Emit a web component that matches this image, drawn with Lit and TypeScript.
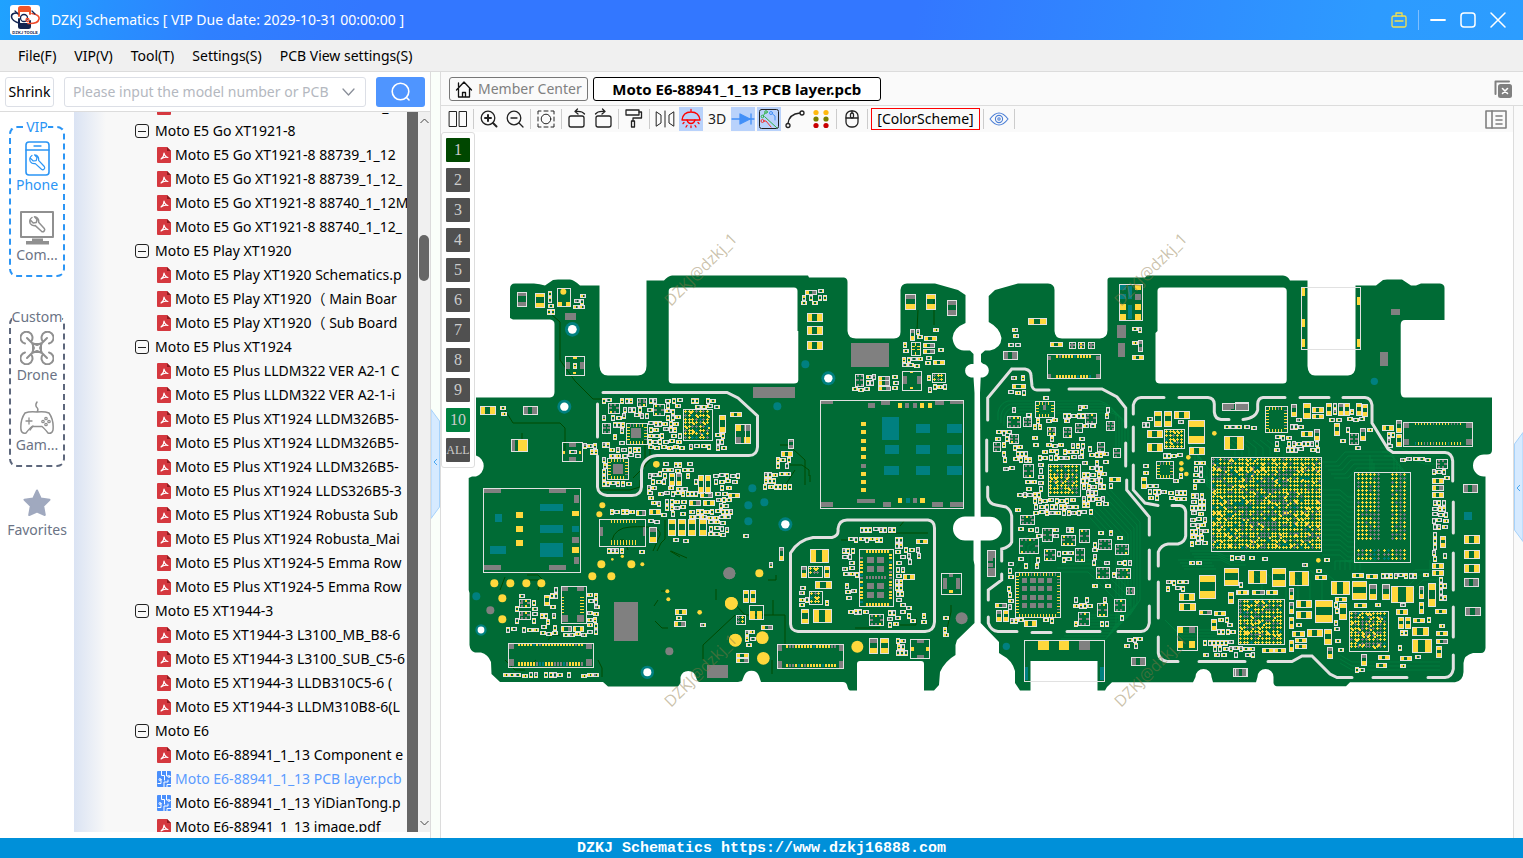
import { LitElement, html, svg, css, nothing } from "lit";
import { customElement, property, state } from "lit/decorators.js";
import { classMap } from "lit/directives/class-map.js";

/* ---------- board geometry ---------- */

const YELLOW = "#ffd83c";
const GREY = "#808080";
const TEAL = "#008080";
const SILK = "#e1e1e1";
const COPPER = "#006b35";

const LEFT_OUTLINE =
  "M510 318V289Q510 283.500 515 283.500H534Q540 284 545 285.500L553 280Q555 279.500 558 279.500H570Q574 280 580 285.500H599.500V366Q600 375.500 608 375.500H638Q646.500 375 646.500 366V280.500H664Q668 276 672 275.500H808L809 277.500H844Q847.500 278 847.500 282V331Q848 338.500 856 338.500H894Q900.500 338 900.500 332V290Q901 283.500 907 283.500H935L958 290L965.500 295V323Q953 328 952.500 338Q954 350 964 350.500H970L973.500 354V364H971A8 7 0 0 0 971 377.500H973.500L974.500 393V516.500H965A12 12 0 0 0 965 540.500H973.500V560L974.500 565V623L957 640L955.500 645V655Q945 661 940 672L939 685L934 690.500H924V664Q924 661 921 661H860Q857 661 857 664V690.500H850Q848 690 847 685Q846 682 843 682H761L759 676A8 8 0 0 0 744 676L742 681L738 682H700Q697 682 696 677A8 8 0 0 0 680.500 677V683L678 686.500H608L603 682H500L491.500 674L491 662Q488 654 481 652.500H475Q470 651 469.500 645V593L468.700 590V478L472 476.500H476A11 11 0 0 0 476 455.500V397.500H550Q554.500 397 554.500 392V324Q554.500 320 550 319.500H513ZM673 287.500Q668.700 287.500 668.700 291V380Q668.700 383.500 673 383.500H794Q798.300 383.500 798.300 380V331H797.500V291Q797.500 287.500 794 287.500Z";

const RIGHT_OUTLINE =
  "M988.700 296L995 290L1018 283.500H1048Q1054.500 284 1054.500 290V331Q1055 338.500 1062 338.500H1100Q1107.500 338 1107.500 330V280Q1107.500 277.500 1110 277.500H1145L1147 275.500H1283Q1288 276 1290 280.500H1307.500V366Q1308 375.500 1315 375.500H1348Q1355.500 375 1355.500 366V285.500H1376L1383 280Q1385 279.500 1387 279.500H1402L1411 285.500H1416L1421 283.500H1440Q1444.500 284 1444.500 288V320H1405Q1400.700 320 1400.700 325V392Q1400.700 397.500 1405 397.500H1492V450Q1492 454.500 1487 454.500H1484A11 11 0 0 0 1484 476.500H1485.500V648Q1485 653 1481 653H1473Q1464 655 1463.500 663V672Q1463 681 1455 682.300H1350L1346 686.300H1277Q1274 686 1273.500 683V677A8 8 0 0 0 1257.500 677L1256 682.300H1213L1211.500 677A8 8 0 0 0 1195.500 677L1193 682.300H1112L1107 687L1105 690.500H1097.500V661H1030.500V690.500H1020L1015 683V671Q1012 660 1002 655L999 653V642L980.700 623V540.500H990A11.800 11.800 0 0 0 990 516.700H980.700L980 393L980.700 377.500H983A7 7 0 0 0 983 363.700L981 362V354L985 350.500H990Q1001 348 1001.500 338Q1000 328 988.700 322ZM1161 287.500Q1157.500 287.500 1157.500 291V331L1155.500 333V380Q1156 383.500 1160 383.500H1283Q1286.700 383.500 1286.700 380V291Q1286.700 287.500 1283 287.500Z";

const SHIELD_FRAMES =
  "M603 392.500H727L738 398L757.500 416V447Q757 455.500 749 455.500H657Q643 457 641.500 470V487Q641 495.500 632 495.500H607Q598 494 597.500 487V456M597.500 404V437" +
  "M847 520H928Q934.500 521 934.500 528V622Q934 631 925 631.500H798Q791 631 790.500 624V553Q798 540 813 537.500H832Q839 536 838 529Q839 520 847 520" +
  "M987.700 420V398L1011.700 369H1025Q1031 370 1031 376L1032 386Q1033 390 1037 390H1049M1069 389H1102L1117 397L1125.700 408V427M986.700 440V471M1125.700 443V466M1126.700 480V490L1149.300 517V535M987.700 487V497Q989 504 996 505L1006 507Q1011 510 1011.700 516V542Q1010 547 1001.700 549V561M1001.700 574V580L988.300 590V600M1149.300 550V579M1149.300 606V623Q1148 631 1141 631.500H1118M1067 631.500H1100M1032 632.500H1051M988.300 617V623Q991 631 998 631.500H1017" +
  "M1133.300 414V405Q1135 398 1141 397.500H1164M1179 397.500H1208Q1214 398 1214.300 404V412Q1215 419 1221 419.500H1229M1243 419.500Q1256 418 1257.700 410V404Q1258 398 1263 397.500H1285M1300 397.500H1329M1343 397.500H1365Q1371 398 1372 405V423L1388 449L1393 452.500H1445Q1452 453 1452.700 461V481M1453.300 502V533M1453.300 553V590M1453.300 607V637M1453.300 655V669Q1452 677 1445 677.500H1428M1407 677.500H1373M1352 677.500H1337L1330 674L1312 656H1302L1292 661.500H1268M1245 661.500H1199M1178 661.500H1167Q1159 660 1158.300 653V637M1158.300 582V618M1158.300 566V552Q1161 545 1168 544H1178Q1185 542 1185.700 536V512Q1185 506 1180 505.500H1172M1133.300 427V451M1133.300 465V490L1145 503L1158 505.500";

/* Each tile has an origin in view units; its entries are in thirds of a unit:
   kind x,y,w,h[,count,dx,dy]. Kinds: o outline, y/g/t pads, h/v two-ended part,
   H/V the same in grey, c small chip, q chip with a pad ring, b grid array. */
interface Tile { x: number; y: number; parts: string; fields: string; dots: string; }

const TILES: Tile[] = [
  {
    x: 465, y: 260,
    parts: "V157,97,28,43 v210,99,28,43 o277,85,39,54 y278,125,13,12 y303,125,12,12 g300,158,33,22 o301,289,57,57 g302,306,13,22 g345,306,12,22 y323,290,12,6 y323,337,10,6 v325,308,10,16 h46,438,44,25 H175,438,42,25 o137,538,47,36 g138,539,12,35 y158,539,27,35 o292,547,60,57 g312,549,20,12 g312,592,20,12 y293,572,7,9 y341,572,7,9 h312,571,20,10 q482,488,62,62 g498,503,30,30 q427,594,64,64 g443,612,31,30 b655,448,88,93 c428,430,34,30 c565,432,32,32 c412,490,24,30 c515,415,26,24 v763,465,18,50 o811,493,30,57 h795,457,33,13",
    fields: "412,415,240,20,.9 470,440,90,42,.8 600,430,50,50,.9 412,465,70,20,.9 440,486,40,65,.8 548,482,105,84,.85 412,545,35,14,.8 430,560,100,30,.9 570,553,200,18,.8 655,415,120,30,.6 750,520,30,50,.9 590,605,100,30,.8 545,640,280,78,.78 412,590,14,70,1 412,664,85,22,1 355,550,45,32,.7 245,93,24,72,1 325,100,32,45,.9 105,438,20,34,.9 283,278,9,17,1 490,440,60,30,.6",
    dots: "y295,95,9 k322,208,22 k298,440,21 y574,613,10",
  },
  {
    x: 465, y: 470,
    parts: "o55,53,291,251 g56,54,52,15 g252,54,50,15 g56,286,52,16 g252,286,50,16 g327,75,15,24 y321,123,21,15 t321,168,21,18 g321,201,21,18 y321,231,21,18 g327,261,15,21 t90,132,21,24 y153,126,21,18,3,0,42 t225,102,69,21 t225,165,69,24 t75,228,48,24 t225,219,69,42 o403,146,138,80 y437,147,4,12,9,9,0 y437,210,4,15,9,9,0 g404,171,8,27 g534,171,8,27 o287,347,74,110 g289,349,20,16 g337,349,22,16 g289,436,20,20 g337,436,22,20 y289,382,8,4,6,0,9 y345,382,12,4,6,0,9 o128,518,254,71 g129,520,17,18 g363,520,17,18 g129,568,17,20 g363,568,17,20 y158,519,5,10,22,9,0 y158,576,5,12,22,9,0 g447,396,72,117 v608,148,20,48,4,31,0 v551,172,20,45 c163,388,32,24 c163,424,32,24 v236,374,14,30 h289,467,30,14 h325,467,30,14 h514,121,26,15 h551,117,32,15 h673,90,34,15 h706,67,36,14 h715,90,32,14 v700,15,14,55 v721,15,14,55 v612,10,14,36 v634,10,14,36 h631,418,32,14 h626,454,32,14 g726,585,63,38",
    fields: "150,370,70,20,.6 200,390,20,70,.7 148,390,14,70,.8 225,430,55,65,.75 255,352,24,65,.8 365,370,35,125,.9 120,470,125,22,.85 290,486,75,12,.9 115,610,75,12,.8 190,605,135,24,.85 325,610,100,12,.7 436,118,80,18,.95 425,235,50,20,.7 520,238,10,18,1 545,2,60,145,.85 600,50,70,95,.85 650,100,160,44,.85 740,10,60,90,.7 730,150,60,45,.8 548,130,60,30,.7 625,205,60,14,.8 630,435,25,12,1 705,458,18,10,1 812,545,28,32,.9",
    dots: "y88,340,12 y136,340,12 y184,340,12 y229,340,12 y112,385,12 y112,448,12 y409,283,12 y499,283,12 y382,319,12 y439,319,12 y412,106,9 y403,133,9 y799,400,19 y811,511,19 y607,364,6 y610,388,6 y704,427,7 y532,283,6 y472,259,5 y442,268,4 t34,379,12 g76,421,12 g793,310,18 g613,544,12 k547,607,20 k48,480,17",
  },
  {
    x: 725, y: 260,
    parts: "h247,158,46,24 h247,199,46,24 h247,243,46,24 g378,249,114,72 g84,381,126,33 v541,102,30,44 v604,102,28,44 V667,120,28,44 o286,419,430,324 g287,420,37,12 g468,420,27,15 g630,420,27,15 g675,420,40,12 g429,429,21,15 y519,429,12,15 g540,429,12,15 g563,429,12,15 y585,429,12,15,2,24,0 y408,486,15,12,5,0,25 g408,612,15,12 y408,636,15,12,3,0,24 t471,471,51,69 t573,492,42,27,3,0,63 t666,492,46,27,3,0,63 t480,555,42,27 t477,618,45,27 g396,717,54,12 y519,714,12,15 t543,714,12,15 g564,714,12,15 y585,714,15,15 g287,726,37,15 g474,726,24,15 g621,726,33,15 g675,726,40,15 o532,332,58,56 g533,347,11,24 g577,347,11,24 y554,333,9,6 y554,380,9,6 c391,341,25,36 q558,247,28,40 o30,493,46,57 y31,494,17,18 g57,494,18,18 g31,530,17,19 y57,530,18,19 h256,868,54,40 h269,962,47,21 h263,1048,54,39 v228,1047,22,42 v228,918,14,34 v297,918,14,34 b248,918,42,32 b252,992,38,40 o403,868,103,172 y423,870,5,9,8,9,0 y405,892,9,5,14,0,10 y492,882,9,5,14,0,10 y423,1028,5,9,8,9,0 g426,891,21,18,2,30,0 g426,918,21,18,2,30,0 g423,948,5,9,7,9,0 g426,969,21,18,2,30,0 g426,996,21,18,2,30,0 c433,1063,43,33 o157,1153,198,72 g158,1155,13,18 g342,1155,12,18 g158,1203,13,20 g342,1203,12,20 y183,1154,5,8,17,9,0 y183,1212,5,9,17,9,0 o649,940,60,63 g654,954,12,33 g693,954,12,33 y672,990,12,9 g672,942,12,9 o556,1138,57,57 g575,1140,20,10 g575,1184,20,10 y558,1160,9,12 y604,1160,9,12 v432,1135,23,46 v466,1135,23,46 o73,1035,43,43 y76,1054,14,23 y96,1054,14,23 b33,1066,28,28 h15,457,33,12 V190,536,14,28 h167,573,34,14 h574,836,34,12 h535,942,32,14 v556,207,12,34 h598,228,36,13 h594,248,34,13 h594,268,34,13 h460,347,34,12 h460,360,34,14 h460,378,36,12 v161,862,12,40 v55,990,14,36 v75,990,14,36 h108,1096,34,12 h34,1178,36,12 h34,1194,36,12 b620,340,38,28 h240,89,34,13 h10,699,34,13 h624,300,34,13",
    fields: "228,88,12,45,1 278,88,28,45,.9 240,104,40,30,.9 572,207,15,35,1 535,245,20,40,.8 622,205,12,25,1 635,260,10,50,.7 530,290,60,30,.75 600,285,26,30,.7 605,345,15,50,1 605,372,60,22,.9 382,380,76,12,.9 420,342,35,34,.85 500,342,25,48,.9 170,540,20,50,.6 150,590,55,40,.7 115,618,90,70,.75 0,640,16,190,.65 5,730,30,20,.7 130,870,30,60,.7 405,802,110,24,.9 365,830,110,22,.95 350,865,50,90,.88 360,968,38,50,.8 368,1015,20,50,.8 510,830,30,250,.8 535,860,60,50,.7 515,1000,40,50,.7 485,1050,30,50,.9 535,1060,40,30,.8 588,1060,20,36,.9 370,1048,60,20,.8 222,975,30,65,.8 298,985,22,55,.7 40,1090,65,22,.9 60,1110,30,50,.9 70,1180,16,25,1 512,1135,36,55,.95 652,1065,24,68,.75 50,822,24,12,1",
    dots: "k310,355,21 k181,793,21 t241,313,12 t157,439,12 t82,685,12 t118,727,12 t70,736,12 t70,784,12 g13,940,18 g710,1075,18 y103,940,12 y19,1030,19 y31,1140,19 y112,1133,19 y115,1195,19 y397,1160,18",
  },
  {
    x: 975, y: 260,
    parts: "h160,174,55,19 h226,247,36,12 o217,283,160,72 g219,288,8,12 g363,288,12,12 g219,342,10,12 g363,342,12,12 y244,284,5,8,12,9,0 y244,346,5,8,12,9,0 c282,245,18,18 c308,245,18,18 c338,245,18,18 o433,73,70,108 t435,75,18,15 y480,75,18,15 t435,102,18,15 g480,102,18,18 t459,78,12,39 y435,132,18,18 y480,132,18,18 y435,162,18,18 y480,162,18,18 t459,135,12,42 g426,195,27,39 g429,249,21,42 h472,284,34,12 V489,240,12,32 H85,274,43,25 q181,422,57,48 g204,435,9,15 b218,612,96,95 V35,871,23,78 g37,890,18,12 g37,910,18,12 q121,935,136,135 g141,954,15,15,4,0,25 g165,954,18,15,4,0,25 g189,954,18,15,4,0,25 g216,954,15,15,4,0,25 c133,835,57,46 o147,1139,241,122 y189,1140,33,30 y252,1140,30,30 g312,1140,33,30 t148,1221,11,39 t376,1221,11,39 c97,467,38,33 c145,470,24,26 c330,458,34,30 c392,482,24,27 c217,500,24,24 c265,502,24,30 c55,545,22,28 c103,522,26,26 c145,612,30,40 c136,765,42,28 c202,803,30,40 c258,826,42,30 c313,808,30,38 c368,836,40,30 c420,852,38,30 c206,868,32,34 c300,864,28,38 c364,922,40,32 c424,925,42,30 c418,1018,34,36 c365,1028,30,38 c310,1055,32,40 c454,980,24,20 c365,545,22,28 c300,490,22,26 c413,565,22,28 h112,373,40,13 h402,650,34,12 v640,481,48,69 h748,527,57,40 b568,508,60,56 q544,604,51,52 h598,452,45,20 v538,452,20,46 v568,452,20,46 h515,511,44,22 h515,550,44,24 h641,560,44,20 v673,946,48,69 v748,923,42,52 h613,1000,46,20 h613,1030,48,22 o605,1097,59,71 y606,1098,18,20 g642,1098,18,20 y606,1143,18,20 y642,1143,18,20 H740,428,77,22 g762,430,14,18 g782,430,10,18 H469,1192,42,24 H773,1224,42,25 b709,591,331,283 h61,1028,34,12 v62,1050,14,32 v84,1050,14,32 h146,1080,36,18 v498,652,14,34 h785,990,34,13 v759,996,14,34 v709,1078,14,34 h673,1050,36,12 h718,1054,34,12",
    fields: "110,200,12,42,1 100,245,42,10,1 268,240,10,22,1 470,200,30,25,.9 470,240,14,20,1 95,370,15,36,.9 105,345,50,26,.8 118,390,40,14,.8 205,405,18,12,1 60,510,45,60,.7 110,440,60,26,.7 80,555,90,50,.65 170,475,75,80,.7 265,460,70,90,.8 310,435,60,70,.75 185,550,150,55,.95 340,540,60,60,.7 390,440,22,50,.8 80,618,32,24,.7 190,605,24,95,.95 318,600,80,140,.82 150,660,60,30,.85 125,695,80,20,.7 175,715,155,60,.92 328,730,30,40,.9 390,670,26,40,.6 120,745,20,12,1 130,800,60,24,.55 180,800,160,110,.52 350,810,110,90,.55 350,900,130,80,.58 125,890,65,32,.65 262,865,24,58,.9 95,905,22,160,.9 295,1010,155,90,.52 105,1075,40,22,.9 185,1075,60,22,.8 500,468,35,32,.8 595,480,40,16,.7 565,578,65,20,1 500,612,38,40,.8 595,640,30,30,.7 515,670,60,50,.7 580,690,60,30,.8 655,600,34,90,.85 645,700,50,165,.98 640,900,50,10,1 735,885,80,25,.5 570,960,65,32,.6 710,1070,70,55,.7 680,1140,160,50,.75 445,1132,62,38,.85 745,495,90,10,.8",
    dots: "t94,1159,11 y718,520,7 y619,610,7 y634,642,7 y640,592,7 y619,628,7",
  },
  {
    x: 1235, y: 260,
    parts: "o199,80,178,185 y201,84,8,24 y201,177,8,24 y201,237,8,24 y366,111,9,24 y366,237,9,24 g468,147,27,18 g435,276,24,42 o505,485,207,71 g507,486,15,18 g693,486,18,18 g507,537,15,18 g693,537,18,18 y540,486,4,9,16,9,0 y540,546,4,9,16,9,0 q89,439,66,78 t687,756,24,24 H685,673,43,24 h686,826,44,24 h686,869,44,24 h686,911,44,24 H686,953,42,24 H690,1042,44,24 h40,931,55,40 v112,923,40,54 h163,932,57,41 h289,962,55,39 v352,964,43,53 v403,973,22,46 v440,973,22,46 h469,977,66,47 v580,968,21,69 v240,1021,50,66 h530,1136,56,40 h532,1101,48,24 h184,1020,44,22 h184,1052,44,22 h215,1108,46,22 v268,1107,22,46 v313,1030,22,47 v203,430,20,46 b10,1018,139,136 b343,1052,118,119 H0,427,38,24 h232,441,32,14 h232,461,34,13 v238,508,14,34 v298,490,14,36 v168,433,14,36 v274,430,14,36 v310,430,14,36 v328,430,14,36 v362,430,14,36 v382,433,14,36 v484,480,14,36 v484,522,14,36 h442,494,34,14 h197,514,34,14 c343,518,26,34 v376,505,14,36 c602,598,34,26 h592,655,34,14 h592,676,34,14 h592,697,34,14 h592,910,32,14 h592,930,32,14 v616,828,16,34 h352,940,34,13 h393,942,34,13 h4,990,34,13 h50,990,36,13 h92,990,34,13 h240,945,34,13 h600,1048,34,12 h482,1048,34,14 h533,1074,34,12 h602,1138,34,12 h602,1114,34,12 h180,1134,34,12 h180,1153,34,12 h172,1112,36,14 v162,1140,12,34 v162,1025,12,34 v162,983,12,34 v162,1070,12,34 v551,977,12,36 v553,1025,12,34 v490,1070,14,34 v510,1070,14,34 h80,1164,34,12 h118,1164,34,12 v378,1182,14,34 h430,1186,34,12 h494,1188,34,12 v603,1158,14,34 v277,1160,14,34 h300,1010,34,12 h358,1028,36,12 h422,1210,30,12 H0,1224,34,25",
    fields: "118,525,145,50,.85 165,475,70,45,.8 270,470,125,20,.85 290,430,12,40,.9 345,430,14,40,.9 315,500,30,50,.7 393,505,18,40,.8 455,515,25,48,.85 495,592,100,10,1 590,626,50,26,.9 625,650,15,90,.8 590,720,48,95,.9 590,815,17,95,1 612,880,26,20,.9 435,940,110,22,.95 562,938,22,20,1 612,950,24,75,.85 612,1070,24,26,.8 575,1070,20,24,.9 475,1110,45,15,.6 495,1030,20,12,1 298,1025,12,140,.7 310,1090,24,80,.8 10,888,130,20,.5 200,905,20,20,1 240,928,20,12,1 268,892,22,10,1 8,965,18,20,1 20,1180,50,10,.8 0,1160,75,12,.7 360,1220,50,14,.7 490,1155,12,24,1 540,1185,20,22,1 495,1212,25,8,1 420,1025,24,10,1 180,1085,24,10,1 8,495,66,10,1 358,558,18,10,1",
    dots: "t418,364,11 y250,901,7",
  },
];

const DARK_TRACES =
  "M551 314L560 322V360L575 381L593 399H603M505 410L513 423H560L565 428V451M522 433V440M657 551L661 543L665 539V520M670 551L680 557M661 591H668M654 606L658 600M655 621L662 628H668M703 660V645L735 615M716 589V600M729 604L733 602L745 615H785V645M793 449L805 460V485M790 465H802L809 470V476M786 484L795 470M773 600V615M768 580H776V575M918 310L917 330M934 300V325M951 605V612L945 637M900 526L905 520H928M885 533H928M841 540H850M855 628H880M900 625H916V618M500 590L505 577M527 575H538L543 580M538 590L541 580H525M548 640L552 635H560M640 480V487L630 490H600M633 478L645 466V440M640 470L650 460V430M705 415V400M705 420L700 440M780 445H790M772 660V674M505 660L515 670H525M530 665L536 660M598 660L602 668V677M620 540H624L628 550M653 551L660 535Q662 525 630 527Q615 528 612 540M671 551L687 558M810 475V482";

const LIGHT_BUNDLES: Array<[string, number, number, number]> = [
  ["M998 420V412Q1000 403 1008 401H1100Q1112 405 1116 415V450", 5, 3, 3],
  ["M1080 470H1092L1140 522V600L1130 615H1085", 9, -3, 3],
  ["M1065 560H1100L1130 590V606", 4, -4, 4],
  ["M1010 575L1020 560V540L1040 530", 4, 4, 3],
  ["M1322 462H1336L1345 452H1388L1394 457V470", 5, 3, 4],
  ["M1322 490H1340L1348 497H1356", 14, 0, 5],
  ["M1190 551H1215L1225 556H1240M1178 560H1210", 4, 2, 3],
  ["M1185 440L1195 450V470L1208 478", 6, 3, 4],
  ["M1335 570V561H1350L1353 558", 6, 5, 0],
  ["M1225 440L1235 448V456", 9, 7, 0],
  ["M1370 455V475M1380 448H1400L1420 456H1440", 3, 2, 4],
  ["M1165 620L1175 630H1240", 4, 3, 3],
  ["M1250 570L1262 580V600", 7, 12, 0],
  ["M1340 655L1352 662H1440", 3, 0, 4],
  ["M1405 580L1415 570H1430V560", 4, 4, 5],
];

function randomiser(seed: number) {
  let a = seed;
  return () => {
    a = (a + 0x6d2b79f5) | 0;
    let t = Math.imul(a ^ (a >>> 15), 1 | a);
    t = (t + Math.imul(t ^ (t >>> 7), 61 | t)) ^ t;
    return ((t ^ (t >>> 14)) >>> 0) / 4294967296;
  };
}

interface Layers { silk: string; base: string; y: string; g: string; t: string; line: string; }

function buildLayers(): Layers {
  const out: Layers = { silk: "", base: "", y: "", g: "", t: "", line: "" };
  const rnd = randomiser(88941);
  const taken: number[][] = [];
  const rect = (k: "silk" | "base" | "y" | "g" | "t", x: number, y: number, w: number, h: number) => {
    out[k] += `M${x} ${y}h${w}v${h}h${-w}z`;
  };
  const pad = (): "y" | "g" => (rnd() < 0.66 ? "y" : "g");
  const outline = (x: number, y: number, w: number, h: number) => {
    out.line += `M${x + 0.5} ${y + 0.5}h${w - 1}v${h - 1}h${1 - w}z`;
  };
  const r = Math.round;
  for (const tile of TILES) {
    for (const entry of tile.parts.split(" ")) {
      const kind = entry[0];
      const [ex, ey, ew, eh, count = 1, dx = 0, dy = 0] = entry.slice(1).split(",").map(Number);
      for (let i = 0; i < count; i++) {
        const x = r(tile.x + (ex + i * dx) / 3);
        const y = r(tile.y + (ey + i * dy) / 3);
        const w = Math.max(1, r(ew / 3));
        const h = Math.max(1, r(eh / 3));
        if (kind === "y" || kind === "g" || kind === "t") {
          let k: "y" | "g" | "t" = kind;
          if (count > 10 && rnd() < 0.25) k = rnd() < 0.6 ? "g" : "t";
          rect(k, x, y, w, h);
          if (w > 5) taken.push([x, y, w, h]);
          continue;
        }
        taken.push([x, y, w, h]);
        outline(x, y, w + 1, h + 1);
        if (kind === "h" || kind === "H") {
          const p = Math.max(2, r(w * 0.33));
          const same = w > 13;
          rect(kind === "H" ? "g" : "y", x + 1, y + 1, p - 1, h - 1);
          rect(kind === "H" ? "g" : same ? "y" : pad(), x + w - p, y + 1, p, h - 1);
        } else if (kind === "v" || kind === "V") {
          const p = Math.max(2, r(h * 0.32));
          rect(kind === "V" ? "g" : h > 16 ? "y" : pad(), x + 1, y + 1, w - 1, p - 1);
          rect(kind === "V" ? "g" : "y", x + 1, y + h - p, w - 1, p);
        } else if (kind === "c") {
          for (let c = 2; c < w - 1; c += 4) {
            rect(rnd() < 0.75 ? "g" : "y", x + c, y + 1, 2, 2);
            rect(rnd() < 0.75 ? "g" : "y", x + c, y + h - 2, 2, 2);
          }
          rect("g", x + 1, y + r(h / 2) - 1, 3, 2);
          rect("g", x + w - 3, y + r(h / 2) - 1, 3, 2);
        } else if (kind === "q") {
          for (let c = 4; c < w - 3; c += 3) {
            rect(pad(), x + c, y + 1, 1, 3);
            rect("y", x + c, y + h - 3, 1, 3);
          }
          for (let c = 4; c < h - 3; c += 3) {
            rect("y", x + 1, y + c, 3, 1);
            rect(pad(), x + w - 3, y + c, 3, 1);
          }
        } else if (kind === "b") {
          const plus = (k: "y" | "g" | "t", px: number, py: number) => {
            rect(k, px, py + 1, 3, 1);
            rect(k, px + 1, py, 1, 3);
          };
          let row = 0;
          for (let py = y + 1; py + 3 <= y + h; py += row++ % 3 === 2 ? 3 : 4) {
            let col = 0;
            for (let px = x + 1; px + 3 <= x + w; px += col++ % 3 === 1 ? 3 : 4) {
              const mid = Math.abs(px - x - w / 2) < w / 4 && Math.abs(py - y - h / 2) < h / 3;
              const v = rnd();
              const k = v < (mid ? 0.45 : 0.2) ? "g" : v > 0.95 ? "t" : "y";
              plus(k, px, py);
              if (rnd() < 0.16 && px + 5 < x + w && py + 5 < y + h) rect("y", px + 2, py + 2, 2, 2);
            }
          }
        }
      }
    }
  }
  /* memory package: two banks of pads above a full row */
  outline(1354, 472, 57, 91);
  for (let row = 0; row < 22; row++)
    for (let col = 0; col < 12; col++) {
      if (row < 17 && (col === 6 || col === 7)) continue;
      if (row === 17 || row === 18) continue;
      const px = 1357 + col * 4 + (col > 5 ? 2 : 0);
      const py = 473 + row * 4;
      const k = (col === 5 || col === 10 || rnd() < 0.2) ? "g" : row > 18 && rnd() < 0.3 ? "t" : "y";
      rect(k, px, py + 1, 3, 1);
      rect(k, px + 1, py, 1, 3);
    }
  /* small passives */
  const free = (x: number, y: number, w: number, h: number) =>
    !taken.some(([a, b, c, d]) => x < a + c + 1 && x + w > a && y < b + d + 1 && y + h > b);
  for (const tile of TILES) {
    for (const f of tile.fields.split(" ")) {
      const [fx, fy, fw, fh, density] = f.split(",").map(Number);
      const x0 = r(tile.x + fx / 3), y0 = r(tile.y + fy / 3);
      const x1 = Math.max(x0 + 6, r(x0 + fw / 3)), y1 = y0 + Math.max(4, r(fh / 3));
      for (let y = y0; y + 3 <= y1; y += 6) {
        let x = x0 + (rnd() < 0.5 ? 0 : 1);
        while (x + 4 <= x1) {
          const tall = y + 6 <= y1 + 1 && rnd() < 0.55;
          const w = tall ? 4 : 6, h = tall ? 6 : 4;
          const yy = y + (tall ? 0 : r(rnd()));
          if (rnd() < density && free(x, yy, w, h)) {
            rect("silk", x, yy, w, h);
            rect("base", x + 1, yy + 1, w - 2, h - 2);
            if (tall) {
              rect(pad(), x + 1, yy + 1, 2, rnd() < 0.4 ? 2 : 1);
              rect(pad(), x + 1, yy + 4, 2, 1);
            } else {
              rect(pad(), x + 1, yy + 1, rnd() < 0.4 ? 2 : 1, 2);
              rect(pad(), x + 4, yy + 1, 1, 2);
            }
            taken.push([x, yy, w - 1, h - 1]);
          }
          x += w + (rnd() < 0.3 ? 1 : 0);
        }
      }
    }
  }
  return out;
}

const LAYERS = buildLayers();

@customElement("pcb-board")
class PcbBoard extends LitElement {
  static styles = css`
    :host { display: block; height: 100%; }
    svg { display: block; width: 100%; height: 100%; }
    .mark { font: 16px "Open Sans", sans-serif; fill: #8c7846; fill-opacity: 0.45; }
  `;

  private dots() {
    const fills: Record<string, string> = { y: YELLOW, g: GREY, t: TEAL, k: TEAL };
    return TILES.flatMap((tile) =>
      tile.dots.split(" ").map((d) => {
        const [x, y, radius] = d.slice(1).split(",").map(Number);
        const cx = tile.x + x / 3, cy = tile.y + y / 3, rad = radius / 3;
        return svg`<circle cx=${cx} cy=${cy} r=${rad} fill=${fills[d[0]]}></circle>
          ${d[0] === "k" ? svg`<circle cx=${cx} cy=${cy} r=${rad * 0.6} fill="#fff"></circle>` : nothing}`;
      }),
    );
  }

  render() {
    return html`<svg viewBox="441 132 1072 706" role="img" aria-label="PCB layer view">
      <path d=${LEFT_OUTLINE + RIGHT_OUTLINE} fill=${COPPER} fill-rule="evenodd"></path>
      <g fill="none" stroke="#008040" stroke-opacity="0.75">
        ${LIGHT_BUNDLES.map(([d, n, dx, dy]) =>
          Array.from({ length: n }, (_, i) => svg`<path d=${d} transform=${`translate(${i * dx} ${i * dy})`}></path>`))}
      </g>
      <path d=${DARK_TRACES} fill="none" stroke="#004a00"></path>
      <path d=${SHIELD_FRAMES} fill="none" stroke=${SILK} stroke-width="3" stroke-linecap="round"></path>
      <g shape-rendering="crispEdges">
        <path d=${LAYERS.silk} fill=${SILK}></path>
        <path d=${LAYERS.base} fill=${COPPER}></path>
        <path d=${LAYERS.g} fill=${GREY}></path>
        <path d=${LAYERS.t} fill=${TEAL}></path>
        <path d=${LAYERS.y} fill=${YELLOW}></path>
        <path d=${LAYERS.line} fill="none" stroke=${SILK}></path>
      </g>
      ${this.dots()}
      ${[[671, 307], [1121, 307], [671, 708], [1121, 708]].map(
        ([x, y]) => svg`<text class="mark" transform=${`translate(${x} ${y}) rotate(-45)`}>DZKJ@dzkj_1</text>`,
      )}
    </svg>`;
  }
}

/* ---------- icons ---------- */

const icon = (body: unknown, w = 24, h = 24) =>
  html`<svg class="icon" width=${w} height=${h} viewBox="0 0 ${w} ${h}" fill="none" stroke="currentColor" stroke-width="1.3" stroke-linecap="round" stroke-linejoin="round" aria-hidden="true">${body}</svg>`;

const WRENCH = "M3 1.500A5 5 0 0 0 1.300 7.600A5 5 0 0 0 6.300 9.600L12.500 15.300A2 2 0 0 0 15.300 12.500L9.600 6.300A5 5 0 0 0 7.600 1.300A5 5 0 0 0 5.500 .8L8 3.600L7.200 6.600L4.200 7L1.600 4.300";

const ICONS = {
  logo: icon(svg`<rect width="30" height="30" rx="3" fill="#fff" stroke="none"></rect>
    <path d="M9 11V3.500Q9 2 10.500 2H18.500Q20 2 20 3.500V9" stroke="#f0562a" stroke-width="2"></path><path d="M9 3H20V7H9Z" fill="#f0562a" stroke="none"></path>
    <path d="M9 14V21.500Q9 23 10.500 23H18.500Q20 23 20 21.500V16" stroke="#122350" stroke-width="2"></path><path d="M9 18H20V23H9Z" fill="#122350" stroke="none"></path>
    <path d="M7 8Q1 8 1.500 12Q2 16 10 18.500" stroke="#122350" stroke-width="1.600"></path><path d="M22 8.500Q30 10 29 14Q28 19 18 18.500" stroke="#ef4a2a" stroke-width="1.600"></path>
    <circle cx="14" cy="13" r="3.500" stroke="#122350"></circle><circle cx="17.500" cy="15" r="1.500" stroke="#ef4a2a"></circle><path d="M5 6L8 9M22 6L25 9" stroke="#122350"></path>
    <text x="15" y="28.500" text-anchor="middle" font-family="Inter" font-size="4" font-weight="700" fill="#122350" stroke="none">DZKJ TOOLS</text>`, 30, 30),
  bag: icon(svg`<rect x="1" y="4" width="14" height="11" rx="1.500"></rect><path d="M5 4V1H11V4M4 9H12"></path>`, 16, 16),
  min: icon(svg`<path d="M1 8H15" stroke-width="1.800"></path>`, 16, 16),
  max: icon(svg`<rect x="1" y="1" width="14" height="14" rx="3" stroke-width="1.500"></rect>`, 16, 16),
  close: icon(svg`<path d="M1 1L15 15M15 1L1 15" stroke-width="1.500"></path>`, 16, 16),
  search: icon(svg`<circle cx="9.500" cy="9.500" r="8.300" stroke-width="1.600"></circle><path d="M15.500 15.500L18 18" stroke-width="1.600"></path>`, 20, 20),
  chevron: icon(svg`<path d="M1 1L6.500 7L12 1"></path>`, 13, 8),
  home: icon(svg`<path d="M1.500 10L9 2L16.500 10M3.500 8.500V17H14.500V8.500M7.500 17V12.500H10.500V17M3.500 6.500V3"></path>`, 18, 18),
  clearTabs: icon(svg`<path d="M1.500 14V1.500H15" stroke-width="2"></path><rect x="4" y="4" width="14" height="14" rx="2.500" fill="currentColor" stroke="none"></rect><path d="M8.500 8.500L13.500 13.500M13.500 8.500L8.500 13.500" stroke="#fff" stroke-width="1.600"></path>`, 18, 18),
  panel: icon(svg`<rect x="1" y="1" width="20" height="17" stroke-width="1.600"></rect><path d="M7 1V18M11 6H17M11 10H17M11 14H17" stroke-width="1.600"></path>`, 22, 19),
  book: icon(svg`<rect x="3.500" y="4.500" width="7" height="15" stroke-width="1"></rect><rect x="13.500" y="4.500" width="7" height="15" stroke-width="1"></rect>`),
  zoomIn: icon(svg`<circle cx="11" cy="11" r="6.800"></circle><path d="M16 16L19.500 19.500" stroke-width="2"></path><path d="M8 11H14M11 8V14" stroke-width="2"></path>`),
  zoomOut: icon(svg`<circle cx="11" cy="11" r="6.800"></circle><path d="M16 16L20 20M8 11H14"></path>`),
  focus: icon(svg`<path d="M4 7V4H7M10 4H14M17 4H20V7M20 10V14M20 17V20H17M14 20H10M7 20H4V17M4 14V10" stroke-width="1"></path><circle cx="12" cy="12" r="4.800" stroke-width="1"></circle>`),
  rotateL: icon(svg`<rect x="4" y="9" width="15" height="11" rx="2"></rect><path d="M19.500 7Q17 3.500 10 4.500M12.500 2L10 4.500L13 7"></path>`),
  rotateR: icon(svg`<rect x="5" y="9" width="15" height="11" rx="2"></rect><path d="M4.500 7Q7 3.500 14 4.500M11.500 2L14 4.500L11 7"></path>`),
  roller: icon(svg`<rect x="4" y="3" width="13" height="5"></rect><path d="M17 5H19.500V11H11V14"></path><rect x="9.500" y="14" width="3" height="6"></rect>`),
  mirror: icon(svg`<path d="M3.500 5L8 8V16L3.500 19ZM12 4V20M20.500 5L16 8V16L20.500 19Z" stroke-width="1"></path>`),
  lamp: icon(svg`<g stroke="#f00"><path d="M3 13Q4 5 12 5Q20 5 21 13ZM12 2.500V5"></path><path d="M8 13Q9 16.500 12 16.500Q15 16.500 16 13"></path><path d="M5 15.500L4 16.500M19 15.500L20 16.500M8 18.500L7 20M16 18.500L17 20M12 19V20.500"></path></g>`),
  diode: icon(svg`<g stroke="#4390f8"><path d="M1 12H23M20 7V17"></path><path d="M9 7L19 12L9 17Z" fill="#4390f8"></path></g>`),
  routes: icon(svg`<rect x="2.500" y="2.500" width="19" height="19" rx="2" stroke-width="1"></rect><g stroke-width="1"><path d="M8 10L20 21M6.500 8.500L8 6" stroke="#2fb344"></path><circle cx="5.500" cy="9.500" r="1.300" stroke="#2fb344"></circle><circle cx="9" cy="5" r="1.300" stroke="#2fb344"></circle><circle cx="14" cy="6" r="1.500" stroke="#4390f8"></circle><path d="M15.500 7L18 9V13" stroke="#4390f8"></path><circle cx="5.500" cy="14" r="1.500" stroke="#e33"></circle><path d="M7 14H9L14 20" stroke="#e33"></path></g>`),
  curve: icon(svg`<circle cx="5" cy="18.500" r="2"></circle><circle cx="19" cy="6" r="2"></circle><path d="M5 16.500Q6 7 17 6"></path>`),
  dots: icon(svg`<g stroke="none"><circle cx="7" cy="5.500" r="2.600" fill="#ffb90f"></circle><circle cx="17" cy="5.500" r="2.600" fill="#ffb90f"></circle><circle cx="7" cy="12" r="2.600" fill="#7a8000"></circle><circle cx="17" cy="12" r="2.600" fill="#7a8000"></circle><circle cx="7" cy="18.500" r="2.600" fill="#c80000"></circle><circle cx="17" cy="18.500" r="2.600" fill="#c80000"></circle></g>`),
  mouse: icon(svg`<rect x="6" y="4" width="12" height="16" rx="5"></rect><path d="M6 11H18M12 4V6"></path><rect x="10.500" y="6" width="3" height="5" rx="1.500"></rect>`),
  eye: icon(svg`<g stroke="#4b7fd6" stroke-width="1.100"><path d="M3 12Q12 0 21 12Q12 24 3 12Z"></path><circle cx="12" cy="12" r="3.600"></circle><circle cx="12" cy="12" r="1.200"></circle></g>`),
  phone: icon(svg`<rect x="1" y="1" width="23" height="33" rx="3" stroke-width="1.600"></rect><path d="M1 9H24M9 5H16"></path><path d=${WRENCH} transform="translate(4 13)" stroke-width="1.200"></path>`, 25, 35),
  computer: icon(svg`<rect x="1" y="1" width="32" height="25" stroke-width="2"></rect><path d="M12 27.500H23V30H29V33.500H6V30H12Z" fill="currentColor" stroke="none"></path><path d=${WRENCH} transform="translate(9 5)" stroke-width="1.500"></path>`, 34, 34),
  drone: icon(svg`<g stroke-width="2"><rect x="13" y="13" width="8" height="8"></rect><path d="M12 12L14 17L12 22M22 12L20 17L22 22M12 12L17 14L22 12M12 22L17 20L22 22M13 13L7 7M21 13L27 7M13 21L7 27M21 21L27 27"></path>
    <path d="M11.500 10A6 6 0 1 0 5 12.500M22.500 10A6 6 0 1 1 29 12.500M11.500 24A6 6 0 1 1 5 21.500M22.500 24A6 6 0 1 0 29 21.500"></path></g>`, 34, 34),
  pad: icon(svg`<path d="M17 11Q19 8 16.500 6Q15 4 17 1M17 11Q24 10 29 12Q34 19 33 29Q32 33 28 32Q24 27 22 25.500H12Q10 27 6 32Q2 33 1 29Q0 19 5 12Q10 10 17 11Z" stroke-width="1.500"></path><path d="M6 20H12M9 17V23M13 25L10 29"></path><circle cx="26" cy="17.500" r="1.200"></circle><circle cx="26" cy="23.500" r="1.200"></circle><circle cx="23" cy="20.500" r="1.200"></circle><circle cx="29" cy="20.500" r="1.200"></circle>`, 34, 34),
  star: icon(svg`<path d="M14 1.500L17.800 9.600L26.500 10.800L20.200 17L21.800 26L14 22.500L6.200 26L7.800 17L1.500 10.800L10.200 9.600Z" fill="#a0a9bf" stroke="#a0a9bf" stroke-width="2"></path>`, 28, 28),
  pdf: icon(svg`<path d="M1 0H10L14 4V15Q14 16 13 16H1Q0 16 0 15V1Q0 0 1 0Z" fill="#d5383f" stroke="none"></path><path d="M10 0V4H14Z" fill="#8f1a1f" stroke="none"></path><path d="M4 12Q7 10 7 6Q8 10 11 10.500Q7 9.500 4 12" stroke="#fff" stroke-width="1.100"></path>`, 14, 16),
  pcb: icon(svg`<rect width="14" height="16" rx="1" fill="#4a8ffb" stroke="none"></rect><g stroke="#fff" stroke-width="1"><path d="M4.500 0V4.500H7.500V9M9.500 0V5H11M1 12.500H4V9.500M7 16V11H11V9M10 16V13.500H14"></path><circle cx="12" cy="5.500" r="1"></circle><circle cx="3" cy="8.500" r="1"></circle></g>`, 14, 16),
};

/* ---------- data ---------- */

interface Group { name: string; files: Array<[string, boolean?]>; }

const TREE: Group[] = [
  { name: "", files: [["Moto E4 XT1761 XT1762.kr New_Sche"]] },
  { name: "Moto E5 Go XT1921-8", files: [["Moto E5 Go XT1921-8 88739_1_12"], ["Moto E5 Go XT1921-8 88739_1_12_"], ["Moto E5 Go XT1921-8 88740_1_12M"], ["Moto E5 Go XT1921-8 88740_1_12_"]] },
  { name: "Moto E5 Play XT1920", files: [["Moto E5 Play XT1920 Schematics.p"], ["Moto E5 Play XT1920（ Main Boar"], ["Moto E5 Play XT1920（ Sub Board"]] },
  { name: "Moto E5 Plus XT1924", files: [["Moto E5 Plus LLDM322 VER A2-1 C"], ["Moto E5 Plus LLDM322 VER A2-1-i"], ["Moto E5 Plus XT1924 LLDM326B5-"], ["Moto E5 Plus XT1924 LLDM326B5-"], ["Moto E5 Plus XT1924 LLDM326B5-"], ["Moto E5 Plus XT1924 LLDS326B5-3"], ["Moto E5 Plus XT1924 Robusta Sub"], ["Moto E5 Plus XT1924 Robusta_Mai"], ["Moto E5 Plus XT1924-5 Emma Row"], ["Moto E5 Plus XT1924-5 Emma Row"]] },
  { name: "Moto E5 XT1944-3", files: [["Moto E5 XT1944-3 L3100_MB_B8-6"], ["Moto E5 XT1944-3 L3100_SUB_C5-6"], ["Moto E5 XT1944-3 LLDB310C5-6 ("], ["Moto E5 XT1944-3 LLDM310B8-6(L"]] },
  { name: "Moto E6", files: [["Moto E6-88941_1_13 Component e"], ["Moto E6-88941_1_13 PCB layer.pcb", true], ["Moto E6-88941_1_13 YiDianTong.p", true], ["Moto E6-88941_1_13 image.pdf"]] },
];

const LAYER_NAMES = ["1", "2", "3", "4", "5", "6", "7", "8", "9", "10", "ALL"];

const TOOLS: Array<[string, unknown, boolean?] | null> = [
  ["Split view", ICONS.book], null,
  ["Zoom in", ICONS.zoomIn], ["Zoom out", ICONS.zoomOut], null,
  ["Fit", ICONS.focus], null,
  ["Rotate left", ICONS.rotateL], ["Rotate right", ICONS.rotateR], null,
  ["Paint", ICONS.roller], null,
  ["Mirror", ICONS.mirror], ["Light", ICONS.lamp, true], ["3D", "3D"],
  ["Diode", ICONS.diode, true], ["Routes", ICONS.routes, true], ["Curve", ICONS.curve], ["Points", ICONS.dots], null,
  ["Mouse", ICONS.mouse], null,
];

@customElement("app-root")
class AppRoot extends LitElement {
  @property() selected = "Moto E6-88941_1_13 PCB layer.pcb";
  @state() private activeLayers = new Set(["1", "10"]);

  static styles = css`
    :host {
      display: flex; flex-direction: column; height: 100vh; overflow: hidden;
      font: 14px/24px "Noto Sans", "Noto Sans CJK SC", sans-serif; color: #000; background: #fff;
    }
    * { box-sizing: border-box; }
    button, input { font: inherit; color: inherit; margin: 0; padding: 0; border: 0; background: none; }
    button { cursor: pointer; white-space: nowrap; }
    ul { list-style: none; margin: 0; padding: 0; }
    .icon { display: block; flex: none; }

    .titlebar { display: flex; align-items: center; flex: none; height: 40px; padding: 0 17px 0 10px; color: #fff;
      background: linear-gradient(100deg, #1fa2ff 0, #2f80ff 14%, #3377ff 24%, #3377ff 60%, #2d9bff 90%, #2c9dff 100%); }
    .titlebar h1 { margin: 0 auto 0 11px; font-size: 14px; font-weight: 400; line-height: 24px; }
    .window { display: flex; align-items: center; gap: 14px; }
    .bag { color: #f4e04d; }
    .window .rule { width: 1px; height: 20px; margin: 0 -3px; background: #7fbfff; }

    .menubar { display: flex; align-items: center; gap: 18px; flex: none; height: 32px; padding-left: 18px; background: #f0f0f0; border-bottom: 1px solid #dcdcdc; }

    .body { display: flex; flex: 1; min-height: 0; }
    .left { display: flex; flex-direction: column; flex: none; width: 431px; border-right: 1px solid #dcdcdc; padding-bottom: 6px; }
    .search { display: flex; align-items: center; flex: none; height: 40px; padding: 0 5px; border-bottom: 1px solid #dcdcdc; }
    .shrink { width: 49px; height: 30px; border: 1px solid #dcdfe6; border-radius: 3px; background: #fff; }
    .combo { display: flex; align-items: center; flex: 1; min-width: 0; height: 30px; margin: 0 10px; padding: 0 10px 0 8px; border: 1px solid #dcdfe6; border-radius: 3px; color: #8a8f99; }
    .combo input { flex: 1; min-width: 0; outline: none; color: #333; }
    .combo input::placeholder { color: #b4b8c0; opacity: 1; }
    .go { display: grid; place-items: center; width: 49px; height: 30px; border-radius: 3px; background: #4f95ff; color: #fff; }

    .split { display: flex; flex: 1; min-height: 0; }
    .rail { flex: none; width: 74px; padding: 3px 9px; color: #909090; }
    .box { display: flex; flex-direction: column; align-items: center; min-width: 0; height: 162px; margin: 0 0 28px; padding: 0; border: 2px dashed #5d677c; border-radius: 8px; }
    .box.vip { border-color: #2b95f5; }
    .box legend { margin: 0 auto; padding: 0; color: #6b7385; }
    .box.vip legend { color: #2b95f5; }
    .cat { display: flex; flex-direction: column; align-items: center; flex: none; width: 100%; height: 70px; }
    .cat .pic { display: grid; place-items: center; height: 38px; }
    .cat .label { color: #6b7385; line-height: 16px; }
    .cat.on, .cat.on .label { color: #2b95f5; }
    .fav { margin-top: -11px; }

    .tree { flex: 1; min-width: 0; overflow: hidden; background: linear-gradient(90deg, #dae3f3 0, #f8f8f8 32px); padding-left: 61px; }
    .tree > ul { margin-top: -41px; }
    .group { display: flex; align-items: center; gap: 6px; height: 24px; }
    .fold { display: grid; place-items: center; width: 14px; height: 14px; border: 1px solid #222; border-radius: 3px; }
    .fold::before { content: ""; width: 8px; height: 1px; background: #222; }
    .file { display: flex; align-items: center; gap: 4px; width: 100%; height: 24px; padding-left: 22px; overflow: hidden; text-align: left; }
    .file.sel { color: #5b9bff; }
    .shade { flex: none; width: 11px; background: #666; }
    .scroll { display: flex; flex-direction: column; align-items: center; justify-content: space-between; flex: none; width: 12px; padding: 6px 0; background: #f0f0f0; color: #444; }
    .thumb { width: 10px; height: 46px; margin-bottom: auto; margin-top: 111px; border-radius: 5px; background: #666; }

    .gutter { flex: none; width: 9px; padding-top: 18px; display: flex; align-items: center; background: #fafffa; }
    .handle { display: block; }

    .right { display: flex; flex-direction: column; flex: 1; min-width: 0; border-left: 1px solid #dcdcdc; }
    .tabs { display: flex; align-items: center; gap: 5px; flex: none; height: 34px; padding: 0 11px 0 8px; background: #fafafa; border-bottom: 1px solid #dcdcdc; }
    .tab { display: flex; align-items: center; justify-content: center; gap: 5px; height: 24px; border: 1px solid #777; border-radius: 3px; background: #fafafa; padding: 0 5px; color: #808080; }
    .tab .icon { color: #111; }
    .tab.on { width: 288px; border-color: #000; color: #000; font-size: 15px; font-weight: 700; background: #fff; }
    .end { margin-left: auto; color: #808080; }

    .pane { display: flex; flex: 1; min-height: 0; }
    .view { display: flex; flex-direction: column; flex: 1; min-width: 0; }
    .toolbar { display: flex; align-items: center; gap: 2px; flex: none; height: 26px; padding: 0 6px 0 5px; background: #fafafa; }
    .tool { display: grid; place-items: center; width: 24px; height: 24px; color: #222; }
    .tool.on { background: #b9d2fb; }
    .sep { width: 1px; height: 20px; margin: 0 1px; background: #ccc; }
    .scheme { width: 109px; height: 22px; border: 1px solid #f00; line-height: 20px; }

    .stage { position: relative; flex: 1; min-height: 0; background: #fff; }
    .layers { position: absolute; top: 0; left: 0; display: flex; flex-direction: column; gap: 6px; padding: 5px 4px; border: 1px solid #ddd; border-radius: 3px; background: #fff; }
    .layer { width: 24px; height: 24px; border-radius: 1px; background: #505050; color: #ccc; font: 16px/24px "Liberation Serif", serif; overflow: hidden; }
    .layer.all { font-size: 12px; }
    .layer.top { background: #004700; }
    .layer.bottom { background: #008040; }
    .edge { display: flex; align-items: center; flex: none; width: 10px; padding-top: 29px; background: #fafafa; border-left: 1px solid #dcdcdc; }

    .status { flex: none; height: 20px; background: #0090d9; color: #fff; text-align: center; font: 700 15px/22px "Liberation Mono", monospace; }
  `;

  private toggle(name: string) {
    const next = new Set(this.activeLayers);
    next.has(name) ? next.delete(name) : next.add(name);
    this.activeLayers = next;
  }

  private category(label: string, pic: unknown, on = false, extra = "") {
    return html`<button class="cat ${on ? "on" : ""} ${extra}"><span class="pic">${pic}</span><span class="label">${label}</span></button>`;
  }

  private handle() {
    return html`<svg class="handle" width="9" height="110" viewBox="0 0 9 110" aria-hidden="true">
      <path d="M0 .5L8.500 12V98L0 109.500Z" fill="#d6eaff" stroke="#a5d2fb"></path>
      <path d="M6 50L3 53L6 56" fill="none" stroke="#4aa8f0"></path></svg>`;
  }

  private edgeHandle() {
    return html`<svg class="handle" width="9" height="110" viewBox="0 0 9 110" aria-hidden="true">
      <path d="M9 .5L.5 12V98L9 109.500Z" fill="#d6eaff" stroke="#a5d2fb"></path>
      <path d="M6 53L3 56L6 59" fill="none" stroke="#4aa8f0"></path></svg>`;
  }

  render() {
    return html`
      <header class="titlebar">
        ${ICONS.logo}
        <h1>DZKJ Schematics [ VIP Due date: 2029-10-31 00:00:00 ]</h1>
        <div class="window">
          <button class="bag" aria-label="Membership">${ICONS.bag}</button>
          <span class="rule"></span>
          <button aria-label="Minimize">${ICONS.min}</button>
          <button aria-label="Maximize">${ICONS.max}</button>
          <button aria-label="Close">${ICONS.close}</button>
        </div>
      </header>
      <nav class="menubar">
        ${["File(F)", "VIP(V)", "Tool(T)", "Settings(S)", "PCB View settings(S)"].map((m) => html`<button>${m}</button>`)}
      </nav>
      <main class="body">
        <section class="left">
          <form class="search" @submit=${(e: Event) => e.preventDefault()}>
            <button type="button" class="shrink">Shrink</button>
            <div class="combo">
              <input type="text" aria-label="Model number" placeholder="Please input the model number or PCB" />
              <button type="button" aria-label="Show history">${ICONS.chevron}</button>
            </div>
            <button class="go" aria-label="Search">${ICONS.search}</button>
          </form>
          <div class="split">
            <nav class="rail">
              <fieldset class="box vip"><legend>VIP</legend>
                ${this.category("Phone", ICONS.phone, true)}${this.category("Com...", ICONS.computer)}
              </fieldset>
              <fieldset class="box"><legend>Custom</legend>
                ${this.category("Drone", ICONS.drone)}${this.category("Gam...", ICONS.pad)}
              </fieldset>
              ${this.category("Favorites", ICONS.star, false, "fav")}
            </nav>
            <div class="tree"><ul>
              ${TREE.map((g) => html`<li>
                <div class="group"><button class="fold" aria-label="Collapse ${g.name}"></button><span>${g.name}</span></div>
                <ul>${g.files.map(([name, board]) => html`<li>
                  <button class=${classMap({ file: true, sel: name === this.selected })} @click=${() => (this.selected = name)}>
                    ${board ? ICONS.pcb : ICONS.pdf}<span>${name}</span></button></li>`)}</ul>
              </li>`)}
            </ul></div>
            <div class="shade"></div>
            <div class="scroll">
              <svg width="9" height="6" viewBox="0 0 9 6" fill="none" stroke="currentColor"><path d="M.5 5L4.500 1L8.500 5"></path></svg>
              <div class="thumb"></div>
              <svg width="9" height="6" viewBox="0 0 9 6" fill="none" stroke="currentColor"><path d="M.5 1L4.500 5L8.500 1"></path></svg>
            </div>
          </div>
        </section>
        <div class="gutter">${this.handle()}</div>
        <section class="right">
          <div class="tabs">
            <button class="tab">${ICONS.home}<span>Member Center</span></button>
            <button class="tab on">Moto E6-88941_1_13 PCB layer.pcb</button>
            <button class="end" aria-label="Close all tabs">${ICONS.clearTabs}</button>
          </div>
          <div class="pane">
            <div class="view">
              <div class="toolbar">
                ${TOOLS.map((t) => t
                  ? html`<button class=${classMap({ tool: true, on: !!t[2] })} aria-label=${t[0]}>${t[1]}</button>`
                  : html`<span class="sep"></span>`)}
                <button class="scheme">[ColorScheme]</button>
                <span class="sep"></span>
                <button class="tool" aria-label="Visibility">${ICONS.eye}</button>
                <span class="sep"></span>
                <button class="end" aria-label="Side panel">${ICONS.panel}</button>
              </div>
              <div class="stage">
                <pcb-board></pcb-board>
                <div class="layers">
                  ${LAYER_NAMES.map((n) => html`<button class=${classMap({
                    layer: true, all: n === "ALL",
                    top: n === "1" && this.activeLayers.has(n),
                    bottom: n !== "1" && this.activeLayers.has(n),
                  })} @click=${() => this.toggle(n)}>${n}</button>`)}
                </div>
              </div>
            </div>
            <div class="edge">${this.edgeHandle()}</div>
          </div>
        </section>
      </main>
      <footer class="status">DZKJ Schematics https://www.dzkj16888.com</footer>
    `;
  }
}
